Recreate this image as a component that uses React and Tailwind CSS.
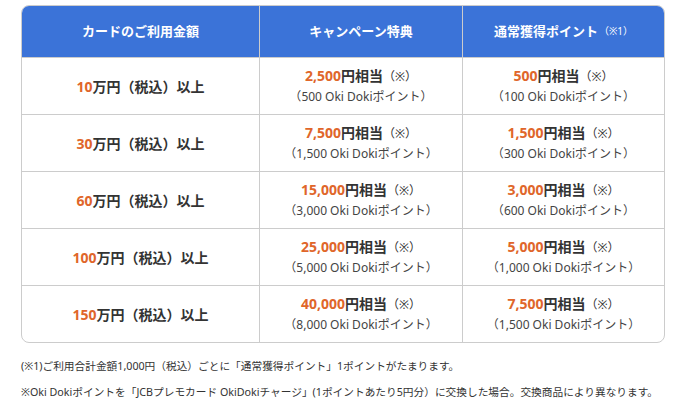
const rows = [
  ['10', '2,500', '500 Oki Doki', '500', '100 Oki Doki'],
  ['30', '7,500', '1,500 Oki Doki', '1,500', '300 Oki Doki'],
  ['60', '15,000', '3,000 Oki Doki', '3,000', '600 Oki Doki'],
  ['100', '25,000', '5,000 Oki Doki', '5,000', '1,000 Oki Doki'],
  ['150', '40,000', '8,000 Oki Doki', '7,500', '1,500 Oki Doki'],
]

function Benefit({ yen, pts }) {
  return (
    <div className="flex flex-col items-center justify-center border-l border-[#cccccc]">
      <div className="text-[14px] font-bold leading-[20px] text-[#333333]">
        <span className="text-[#e0662a]">{yen}</span>円相当<span className="text-[12px] font-normal">（※）</span>
      </div>
      <div className="text-[12px] leading-[18px] mt-[1px] text-[#444444]">（{pts}ポイント）</div>
    </div>
  )
}

export default function App() {
  return (
    <div
      className="w-[689px] h-[408px] bg-white pt-[5px] pl-[21px] text-[#333333]"
      style={{ fontFamily: '"Noto Sans", "Noto Sans CJK JP", sans-serif' }}
    >
      <div className="w-[644px] rounded-[8px] border border-[#cccccc] overflow-hidden">
        <div className="grid grid-cols-[237px_203px_1fr] h-[51px] bg-[#3b73d8] text-white text-[13px] font-bold">
          <div className="flex items-center justify-center">カードのご利用金額</div>
          <div className="flex items-center justify-center border-l border-[#cccccc]">キャンペーン特典</div>
          <div className="flex items-center justify-center border-l border-[#cccccc]">
            通常獲得ポイント<span className="text-[10px] font-normal ml-[1px]">（※1）</span>
          </div>
        </div>
        {rows.map((r) => (
          <div key={r[0]} className="grid grid-cols-[237px_203px_1fr] h-[57px] border-t border-[#cccccc]">
            <div className="flex items-center justify-center text-[14px] font-bold">
              <span className="text-[#e0662a]">{r[0]}</span>万円（税込）以上
            </div>
            <Benefit yen={r[1]} pts={r[2]} />
            <Benefit yen={r[3]} pts={r[4]} />
          </div>
        ))}
      </div>
      <p className="mt-[15px] text-[10.7px] leading-[16px] text-[#333333]">
        (※1)ご利用合計金額1,000円（税込）ごとに「通常獲得ポイント」1ポイントがたまります。
      </p>
      <p className="mt-[10px] text-[10.7px] leading-[16px] text-[#333333]">
        ※Oki Dokiポイントを「JCBプレモカード OkiDokiチャージ」(1ポイントあたり5円分）に交換した場合。交換商品により異なります。
      </p>
    </div>
  )
}
